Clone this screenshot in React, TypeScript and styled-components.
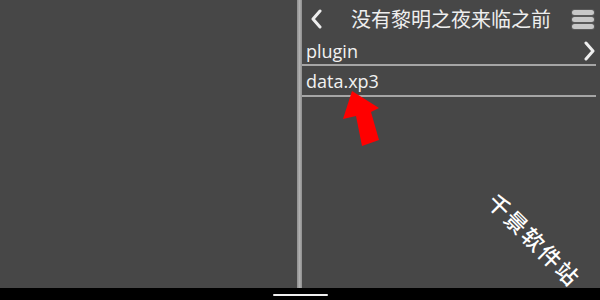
import React from "react";
import styled, { createGlobalStyle } from "styled-components";

const Global = createGlobalStyle`
  html, body { margin: 0; padding: 0; background: #000; }
  body { font-family: "Open Sans", "Noto Sans CJK SC", sans-serif; }
`;

const Screen = styled.div`
  width: 600px;
  height: 300px;
  display: flex;
  flex-direction: column;
  position: relative;
  overflow: hidden;
`;

const Main = styled.div`
  height: 288px;
  display: flex;
  background: #474747;
`;

const LeftPane = styled.div`
  width: 297px;
  background: #474747;
`;

const Divider = styled.div`
  width: 5px;
  background: linear-gradient(90deg, #8e8e8e, #b0b0b0 50%, #8e8e8e);
`;

const RightPane = styled.div`
  flex: 1;
  display: flex;
  flex-direction: column;
  position: relative;
`;

const Header = styled.div`
  height: 38px;
  display: flex;
  align-items: center;
  padding: 0 6px 0 4px;
`;

const BackBtn = styled.div`
  width: 20px;
  height: 38px;
  display: flex;
  align-items: center;
  justify-content: center;
`;

const Title = styled.div`
  flex: 1;
  text-align: center;
  font-family: "Noto Sans CJK SC", sans-serif;
  font-size: 20px;
  color: #eeeeee;
  line-height: 38px;
  padding-left: 10px;
`;

const Menu = styled.div`
  width: 22px;
  display: flex;
  flex-direction: column;
  gap: 2px;
  margin-left: 6px;
`;

const MenuBar = styled.div`
  height: 5px;
  border-radius: 3px;
  background: #c8c8c8;
  box-shadow: 0 0 0 1px #5a5a5a;
`;

const Row = styled.div<{ $h: number }>`
  height: ${(p) => p.$h}px;
  display: flex;
  align-items: center;
  justify-content: space-between;
  padding: 0 6px 0 4px;
  font-size: 18px;
  color: #f2f2f2;
  border-bottom: 2px solid #a6a6a6;
  margin-right: 4px;
`;

const BottomBar = styled.div`
  flex: 1;
  background: #000;
  display: flex;
  align-items: center;
  justify-content: center;
`;

const HomeIndicator = styled.div`
  width: 55px;
  height: 2px;
  background: #f0f0f0;
  border-radius: 1px;
  margin-top: 1px;
`;

const ArrowSvg = styled.svg`
  position: absolute;
  left: 0;
  top: 0;
  pointer-events: none;
`;

const Watermark = styled.div`
  position: absolute;
  left: 475px;
  top: 223px;
  transform: rotate(45deg);
  transform-origin: center;
  font-family: "Noto Sans CJK SC", sans-serif;
  font-weight: 500;
  font-size: 22px;
  letter-spacing: 2px;
  color: #ffffff;
  white-space: nowrap;
  width: 120px;
  text-align: center;
`;

export default function App() {
  return (
    <>
      <Global />
      <Screen>
        <Main>
          <LeftPane />
          <Divider />
          <RightPane>
            <Header>
              <BackBtn>
                <svg width="12" height="20" viewBox="0 0 12 20">
                  <path d="M10 2 L3 10 L10 18" fill="none" stroke="#eeeeee" strokeWidth="3" strokeLinecap="round" strokeLinejoin="round" />
                </svg>
              </BackBtn>
              <Title>没有黎明之夜来临之前</Title>
              <Menu>
                <MenuBar />
                <MenuBar />
                <MenuBar />
              </Menu>
            </Header>
            <Row $h={26}>
              <span>plugin</span>
              <svg width="12" height="20" viewBox="0 0 12 20" style={{ marginRight: -6 }}>
                <path d="M2 2 L9 10 L2 18" fill="none" stroke="#eeeeee" strokeWidth="3" strokeLinecap="round" strokeLinejoin="round" />
              </svg>
            </Row>
            <Row $h={29}>
              <span>data.xp3</span>
            </Row>
          </RightPane>
        </Main>
        <BottomBar>
          <HomeIndicator />
        </BottomBar>
        <ArrowSvg width="600" height="300" viewBox="0 0 600 300">
          <polygon
            points="352,91 379,108 371,112 379,140 362,146 356,116 343,119"
            fill="#ff0000"
          />
        </ArrowSvg>
        <Watermark>千景软件站</Watermark>
      </Screen>
    </>
  );
}
